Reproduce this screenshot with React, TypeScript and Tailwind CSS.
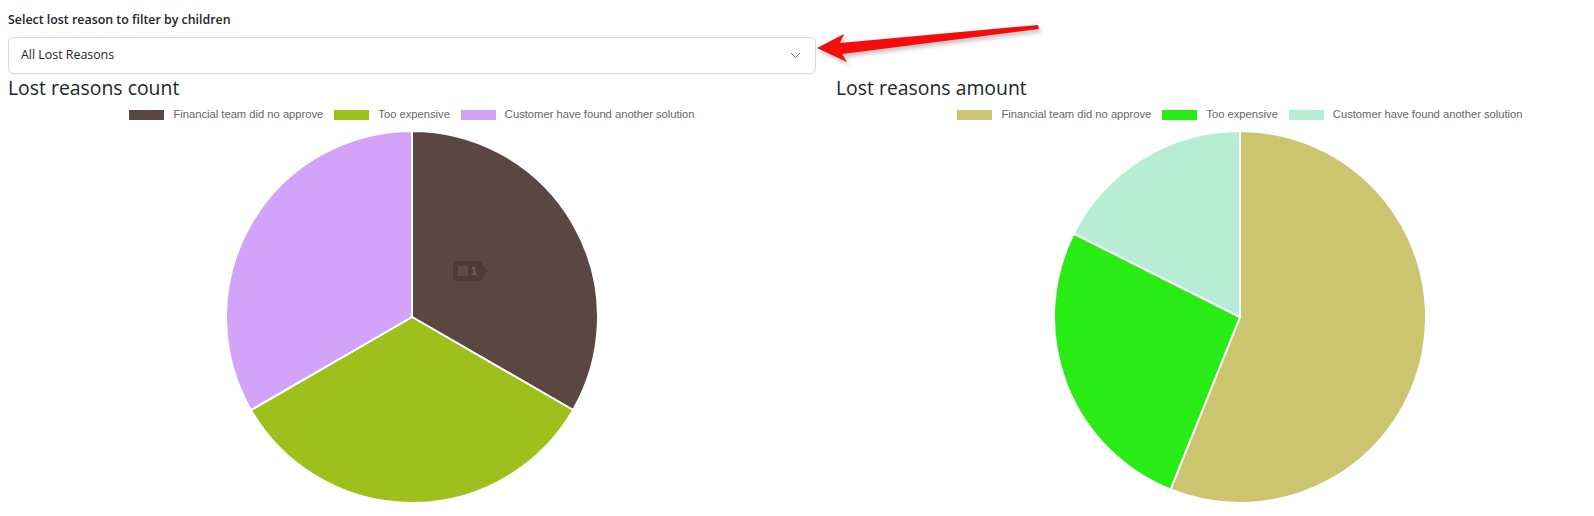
import { useState } from "react";

type Slice = { label: string; color: string; value: number };

const countData: Slice[] = [
  { label: "Financial team did no approve", color: "#5b4741", value: 1 },
  { label: "Too expensive", color: "#9fbf1c", value: 1 },
  { label: "Customer have found another solution", color: "#d3a3f9", value: 1 },
];

const amountData: Slice[] = [
  { label: "Financial team did no approve", color: "#ccc570", value: 56.1 },
  { label: "Too expensive", color: "#29ec16", value: 26.3 },
  { label: "Customer have found another solution", color: "#b6edd4", value: 17.6 },
];

function Pie({ data, showTip }: { data: Slice[]; showTip?: boolean }) {
  const cx = 404;
  const cy = 188;
  const r = 186;
  const total = data.reduce((s, d) => s + d.value, 0);
  let start = -Math.PI / 2;

  const paths = data.map((d) => {
    const sweep = (d.value / total) * Math.PI * 2;
    const end = start + sweep;
    const x1 = cx + r * Math.cos(start);
    const y1 = cy + r * Math.sin(start);
    const x2 = cx + r * Math.cos(end);
    const y2 = cy + r * Math.sin(end);
    const large = sweep > Math.PI ? 1 : 0;
    const p = `M ${cx} ${cy} L ${x1} ${y1} A ${r} ${r} 0 ${large} 1 ${x2} ${y2} Z`;
    start = end;
    return <path key={d.label} d={p} fill={d.color} stroke="#fff" strokeWidth={2} strokeLinejoin="round" />;
  });

  return (
    <svg width={808} height={390} className="block">
      {paths}
      {showTip && (
        <g opacity={0.16}>
          <rect x={445} y={132} width={30} height={20} rx={4} fill="#000" />
          <path d="M475 137 L480 142 L475 147 Z" fill="#000" />
          <rect x={450} y={137} width={10} height={10} fill="#fff" opacity={0.45} />
          <text x={463} y={146} fontSize={11} fill="#fff" fontFamily="'Liberation Sans', Arial, sans-serif" fontWeight={700}>
            1
          </text>
        </g>
      )}
    </svg>
  );
}

function Legend({ data }: { data: Slice[] }) {
  return (
    <div className="flex h-[22px] items-center justify-center gap-[11px] font-['Liberation_Sans',Arial,sans-serif] text-[11.2px] text-[#666]">
      {data.map((d) => (
        <div key={d.label} className="flex items-center gap-[9px]">
          <span className="h-[10px] w-[35px]" style={{ backgroundColor: d.color }} />
          <span>{d.label}</span>
        </div>
      ))}
    </div>
  );
}

function ChartCard({ title, data, showTip }: { title: string; data: Slice[]; showTip?: boolean }) {
  return (
    <div className="w-[808px] shrink-0">
      <h2 className="h-[30px] font-['Open_Sans',sans-serif] text-[19.4px] leading-[28px] text-[#212529]">{title}</h2>
      <Legend data={data} />
      <div className="mt-[3px]">
        <Pie data={data} showTip={showTip} />
      </div>
    </div>
  );
}

export default function App() {
  const [reason, setReason] = useState("all");

  return (
    <div className="relative h-[516px] w-[1594px] overflow-hidden bg-white font-['Open_Sans',sans-serif]">
      <div className="px-2 pt-[11px]">
        <label className="block text-[12.4px] font-semibold text-[#212529]">Select lost reason to filter by children</label>
        <div className="relative mt-[7px] w-[808px]">
          <select
            value={reason}
            onChange={(e) => setReason(e.target.value)}
            className="h-[37px] w-full appearance-none rounded-[5px] border border-[#dcdcdc] bg-white pl-[12px] text-[12.4px] text-[#212529] outline-none"
          >
            <option value="all">All Lost Reasons</option>
            <option value="financial">Financial team did no approve</option>
            <option value="expensive">Too expensive</option>
            <option value="solution">Customer have found another solution</option>
          </select>
          <svg className="pointer-events-none absolute right-[15px] top-[15px]" width="11" height="7" viewBox="0 0 11 7">
            <path d="M1 1 L5.5 5.5 L10 1" fill="none" stroke="#777" strokeWidth="1" />
          </svg>
        </div>
        <div className="flex gap-[20px]">
          <ChartCard title="Lost reasons count" data={countData} showTip />
          <ChartCard title="Lost reasons amount" data={amountData} />
        </div>
      </div>

      {/* annotation arrow */}
      <svg className="pointer-events-none absolute left-0 top-0" width={1594} height={516}>
        <defs>
          <filter id="sh" x="-10%" y="-50%" width="120%" height="200%">
            <feDropShadow dx="2" dy="3" stdDeviation="2" floodColor="#000" floodOpacity="0.25" />
          </filter>
        </defs>
        <polygon
          points="817,48 844,34 840,43 1038,25 1039,29 842,54 847,62"
          fill="#f50a0a"
          filter="url(#sh)"
        />
      </svg>
    </div>
  );
}
